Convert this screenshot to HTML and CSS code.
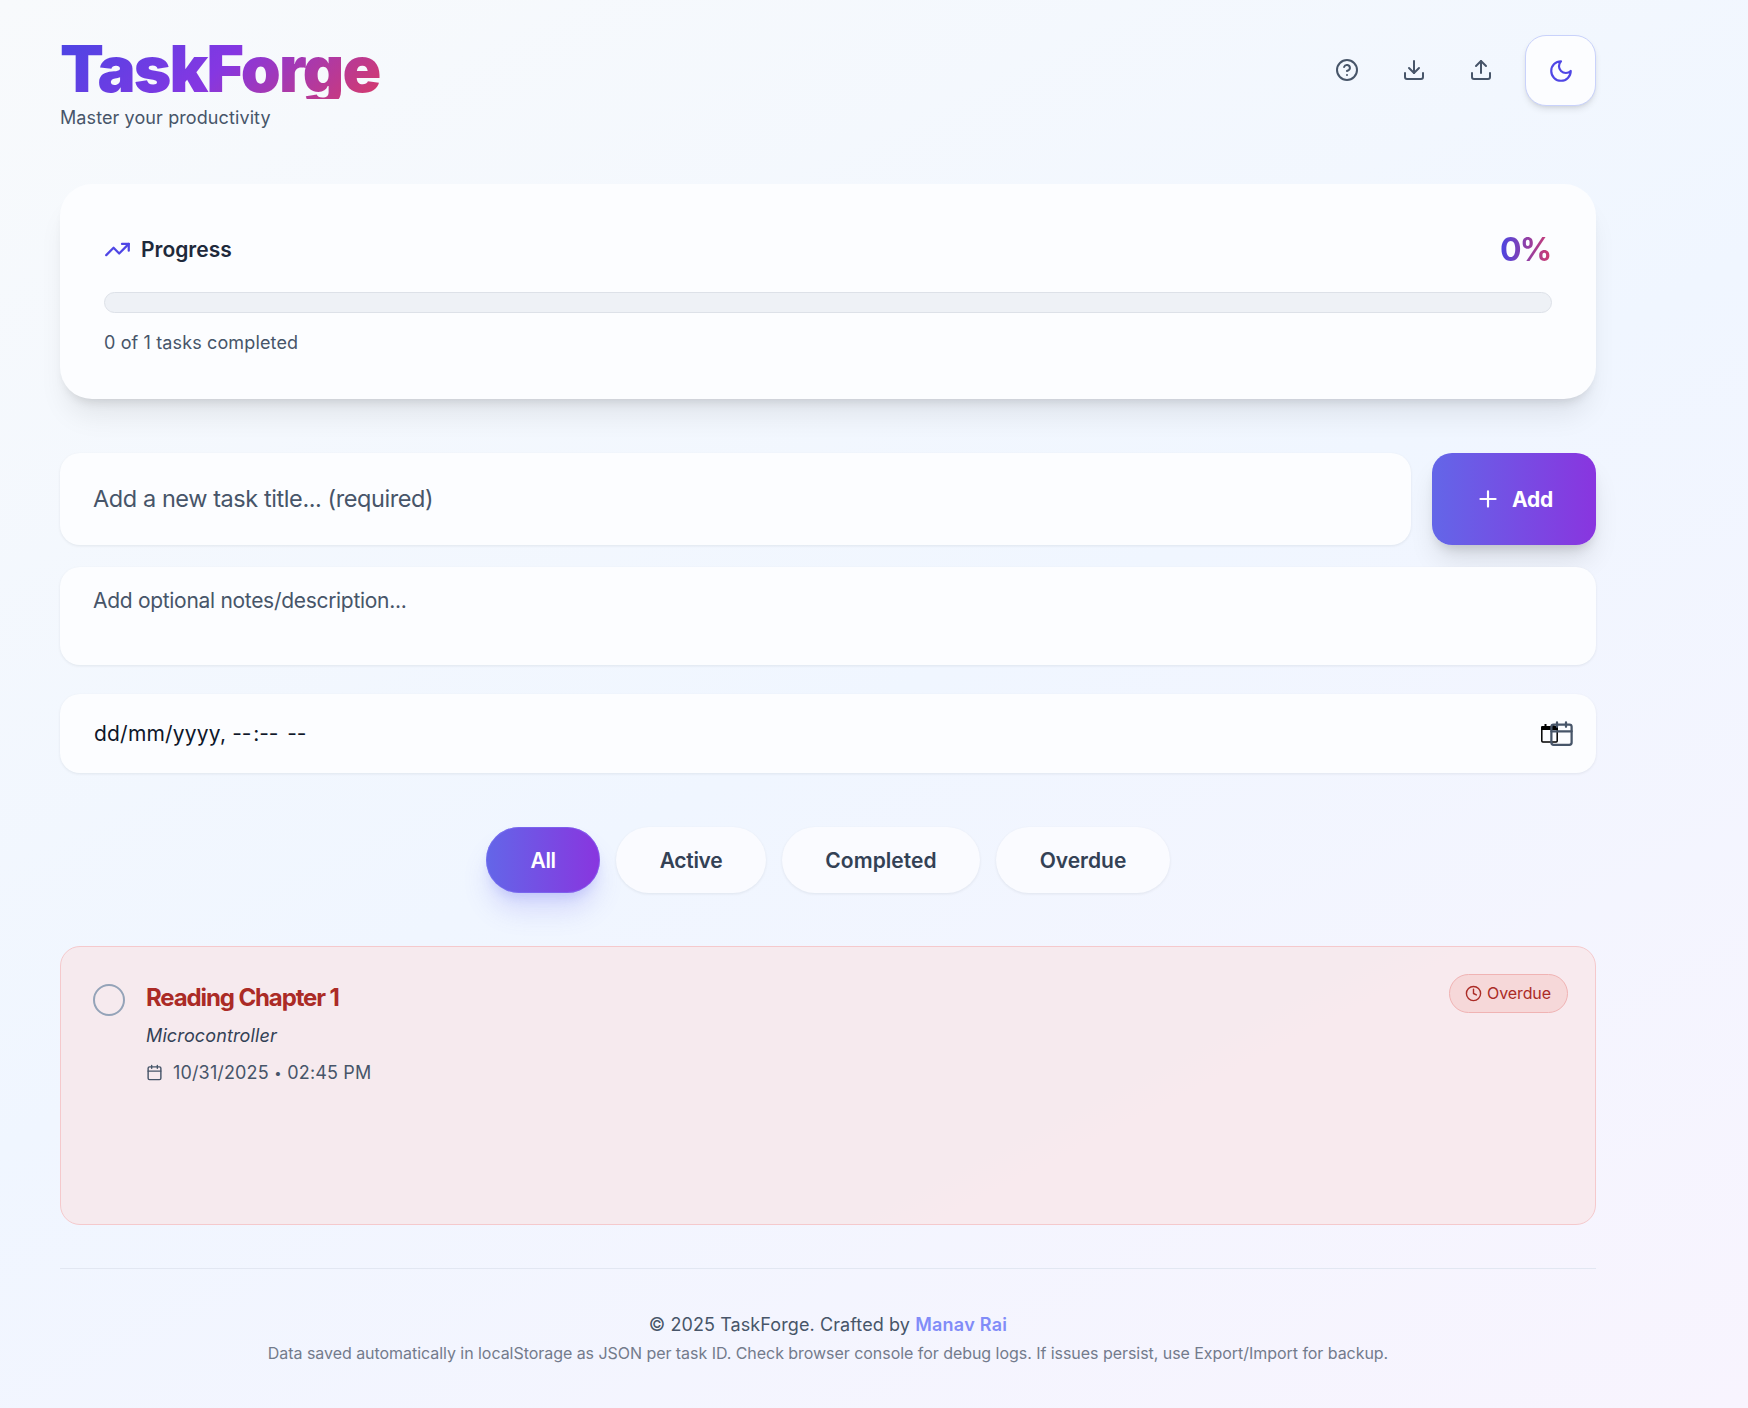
FILE: index.html
```html
<!DOCTYPE html>
<html lang="en">
<head>
<meta charset="utf-8">
<title>TaskForge</title>
<link rel="stylesheet" href="styles.css">
</head>
<body>
<div class="container">
  <header class="header">
    <div>
      <h1 class="brand">TaskForge</h1>
      <p class="tagline">Master your productivity</p>
    </div>
    <div class="actions">
      <button class="icon-btn" aria-label="Help"><svg class="icon" viewBox="0 0 24 24"><circle cx="12" cy="12" r="10"/><path d="M9.09 9a3 3 0 0 1 5.83 1c0 2-3 3-3 3"/><path d="M12 17h.01"/></svg></button>
      <button class="icon-btn" aria-label="Export"><svg class="icon" viewBox="0 0 24 24"><path d="M21 15v4a2 2 0 0 1-2 2H5a2 2 0 0 1-2-2v-4"/><path d="m7 10 5 5 5-5"/><path d="M12 15V3"/></svg></button>
      <button class="icon-btn" aria-label="Import"><svg class="icon" viewBox="0 0 24 24"><path d="M21 15v4a2 2 0 0 1-2 2H5a2 2 0 0 1-2-2v-4"/><path d="m17 8-5-5-5 5"/><path d="M12 3v12"/></svg></button>
      <button class="theme-btn" aria-label="Toggle theme"><svg class="icon" viewBox="0 0 24 24"><path d="M12 3a6 6 0 0 0 9 9 9 9 0 1 1-9-9Z"/></svg></button>
    </div>
  </header>

  <section class="progress">
    <div class="progress-head">
      <div class="progress-label">
        <svg class="trend" viewBox="0 0 24 24"><path d="m22 7-8.5 8.5-5-5L2 17"/><path d="M16 7h6v6"/></svg>
        <h2 class="progress-title">Progress</h2>
      </div>
      <span class="percent">0%</span>
    </div>
    <div class="bar"></div>
    <p class="progress-text">0 of 1 tasks completed</p>
  </section>

  <form class="form">
    <div class="title-row">
      <input class="field title-input" type="text" placeholder="Add a new task title... (required)">
      <button class="add-btn" type="button"><svg class="plus" viewBox="0 0 24 24"><path d="M5 12h14M12 5v14"/></svg><span>Add</span></button>
    </div>
    <textarea class="field notes" placeholder="Add optional notes/description..."></textarea>
    <div class="field date-field">
      <span class="date-text"><span class="date-part">dd/mm/yyyy,</span><span class="dash">--</span><span class="colon">:</span><span class="dash">--</span><span class="dash meridiem">--</span></span>
      <span class="date-icons">
        <svg class="picker" viewBox="0 0 17 19"><path class="solid" d="M1.5 2h2V0h2v2h6V0h2v2h2a1.4 1.4 0 0 1 1.4 1.4V6H.1V3.400A1.400 1.400 0 0 1 1.500 2Z"/><rect x=".8" y="2.800" width="15.400" height="15.200" rx="1"/></svg>
        <svg class="calendar" viewBox="0 0 24 24"><path d="M8 2v4M16 2v4"/><rect width="18" height="18" x="3" y="4" rx="2"/><path d="M3 10h18"/></svg>
      </span>
    </div>
  </form>

  <nav class="filters">
    <button class="filter active all">All</button>
    <button class="filter act">Active</button>
    <button class="filter completed">Completed</button>
    <button class="filter overdue">Overdue</button>
  </nav>

  <article class="task">
    <span class="check"></span>
    <div class="task-body">
      <h3 class="task-title">Reading Chapter 1</h3>
      <p class="task-notes">Microcontroller</p>
      <p class="task-date"><svg class="small-cal" viewBox="0 0 24 24"><path d="M8 2v4M16 2v4"/><rect width="18" height="18" x="3" y="4" rx="2"/><path d="M3 10h18"/></svg><span>10/31/2025 <span class="dot">•</span> 02:45 PM</span></p>
    </div>
    <span class="badge"><svg class="clock" viewBox="0 0 24 24"><circle cx="12" cy="12" r="10"/><path d="M12 6v6l4 2"/></svg>Overdue</span>
  </article>

  <footer class="footer">
    <p class="credit">© 2025 TaskForge. Crafted by <a class="author">Manav Rai</a></p>
    <p class="hint">Data saved automatically in localStorage as JSON per task ID. Check browser console for debug logs. If issues persist, use Export/Import for backup.</p>
  </footer>
</div>
</body>
</html>
```
FILE: styles.css
```css
* { box-sizing: border-box; margin: 0; padding: 0; }

body {
  min-height: 1408px;
  font-family: Inter, "Liberation Sans", sans-serif;
  font-size: 18px;
  line-height: 27px;
  color: #1e293b;
  background: linear-gradient(153deg, #f8fafc 0%, #f0f6ff 50%, #f8f4fe 100%);
}

button, input, textarea { font-family: inherit; border: 0; outline: 0; }

svg {
  fill: none;
  stroke: currentColor;
  stroke-width: 2;
  stroke-linecap: round;
  stroke-linejoin: round;
  flex: none;
}

.container { width: 1536px; margin-left: 60px; padding-top: 35px; }

/* Header */
.header { display: flex; justify-content: space-between; align-items: flex-start; height: 149px; }

.brand {
  width: 321px;
  height: 64px;
  margin-left: -1px;
  padding-left: 1px;
  font-size: 64px;
  line-height: 67px;
  font-weight: 900;
  letter-spacing: -1.850px;
  color: transparent;
  background: linear-gradient(135deg, #4a45e4 0%, #8537e2 50%, #d63a6a 100%);
  -webkit-background-clip: text;
  background-clip: text;
}

.tagline { margin-top: 5px; color: #475569; letter-spacing: .1px; }

.actions { display: flex; align-items: center; gap: 20px; }

.icon-btn {
  display: grid;
  place-items: center;
  width: 47px;
  height: 47px;
  padding: 0 2px 2px 0;
  background: transparent;
  color: #475569;
}

.icon { width: 24px; height: 24px; }

.theme-btn {
  display: grid;
  place-items: center;
  width: 71px;
  height: 71px;
  border: 1px solid #c9d2fb;
  border-radius: 21px;
  background: #fcfdff;
  color: #4f46e5;
  box-shadow: 0 4px 7px -1px rgba(0, 0, 0, .1), 0 2px 4px -2px rgba(0, 0, 0, .1);
}

.theme-btn .icon { width: 26px; height: 26px; }

/* Progress card */
.progress {
  height: 215px;
  padding: 44px;
  border-radius: 32px;
  background: #fcfdff;
  box-shadow: 0 22px 28px -6px rgba(0, 0, 0, .08), 0 8px 11px -6px rgba(0, 0, 0, .13);
}

.progress-head { display: flex; justify-content: space-between; align-items: center; height: 42px; }
.progress-label { display: flex; align-items: center; gap: 10px; }
.trend { width: 27px; height: 27px; color: #4f46e5; }
.progress-title { font-size: 21px; font-weight: 600; }

.percent {
  padding-top: 2px;
  font-size: 32px;
  line-height: 42px;
  font-weight: 700;
  letter-spacing: -1.800px;
  padding-right: 1.500px;
  color: transparent;
  background: linear-gradient(90deg, #4a45e4, #d23a6c);
  -webkit-background-clip: text;
  background-clip: text;
}

.bar { height: 21px; margin-top: 22px; border: 1px solid #dde1e8; border-radius: 11px; background: #eef1f6; }
.progress-text { margin-top: 16px; color: #475569; letter-spacing: .13px; }

/* Task form */
.form { margin-top: 54px; }
.title-row { display: flex; gap: 21px; }

.field {
  display: block;
  width: 100%;
  border-radius: 20px;
  background: #fcfdff;
  box-shadow: 0 1px 3px rgba(15, 23, 42, .08);
}

.field::placeholder { color: #475569; opacity: 1; }
.title-input { flex: 1; height: 92px; padding: 0 33px 2px; font-size: 23.500px; letter-spacing: -.42px; }

.add-btn {
  display: flex;
  justify-content: center;
  align-items: center;
  gap: 11px;
  width: 164px;
  height: 92px;
  border-radius: 20px;
  font-size: 21px;
  font-weight: 700;
  letter-spacing: -.2px;
  color: #fff;
  background: linear-gradient(90deg, #6366e8, #8935df);
  box-shadow: 0 18px 28px -4px rgba(0, 0, 0, .11), 0 8px 12px -5px rgba(0, 0, 0, .15);
}

.plus { width: 26px; height: 26px; }

.notes {
  position: relative;
  height: 98px;
  margin-top: 22px;
  padding: 18px 33px;
  font-size: 21px;
  line-height: 32px;
  letter-spacing: -.3px;
  resize: none;
}

.date-field {
  display: flex;
  justify-content: space-between;
  align-items: center;
  height: 79px;
  margin-top: 29px;
  padding: 0 21px 0 34px;
  font-size: 21px;
  color: #0f172a;
}

.date-text { display: flex; }
.date-part { letter-spacing: .2px; margin-right: 6px; }
.dash { width: 21px; letter-spacing: -.2px; }
.colon { width: 6px; }
.meridiem { margin-left: 7px; }
.date-icons { display: flex; align-items: center; }
.picker { width: 17px; height: 19px; margin-right: -10px; color: #000; stroke-width: 1.500; }
.picker .solid { fill: #000; stroke: none; }
.calendar { width: 27px; height: 27px; color: #475569; }

/* Filters */
.filters { display: flex; justify-content: center; gap: 16px; margin-top: 54px; }

.filter {
  height: 66px;
  border-radius: 33px;
  font-size: 21px;
  font-weight: 600;
  color: #334155;
  background: #fafbff;
  box-shadow: 0 1px 3px rgba(15, 23, 42, .08);
}

.all { width: 114px; letter-spacing: -.5px; }
.act { width: 150px; letter-spacing: -.3px; }
.completed { width: 198px; letter-spacing: .05px; }
.overdue { width: 174px; letter-spacing: 0; }

.active {
  color: #fff;
  background: linear-gradient(90deg, #6366e8, #8935df);
  box-shadow: inset 0 0 0 1px rgba(129, 120, 248, .5), 0 20px 26px -2px rgba(99, 102, 241, .18), 0 8px 12px -4px rgba(99, 102, 241, .2);
}

/* Task card */
.task {
  display: flex;
  align-items: flex-start;
  height: 279px;
  margin-top: 53px;
  padding: 27px 27px 0 32px;
  border: 1px solid #f5c9cc;
  border-radius: 20px;
  background: linear-gradient(153deg, #f6eaee 64%, #f8eaee 68%);
}

.check { width: 32px; height: 32px; margin-top: 10px; border: 2px solid #94a3b8; border-radius: 50%; }
.task-body { flex: 1; margin: 9px 0 0 21px; }
.task-title { font-size: 24px; line-height: 30px; font-weight: 700; letter-spacing: -1.120px; color: #ab2b26; }
.task-notes { margin-top: 9px; font-style: italic; letter-spacing: .12px; color: #334155; }
.task-date { display: flex; align-items: center; gap: 10px; margin-top: 10px; color: #475569; letter-spacing: .15px; }
.dot { display: inline-block; width: 8px; font-size: 13px; line-height: 18px; text-align: center; vertical-align: 1px; }
.small-cal { width: 17px; height: 17px; }

.badge {
  display: flex;
  justify-content: center;
  align-items: center;
  gap: 5px;
  width: 119px;
  height: 39px;
  border: 1px solid #f0b3b3;
  border-radius: 20px;
  padding-right: 1px;
  font-size: 16px;
  letter-spacing: -.1px;
  color: #ab2b26;
  background: #f6d8d9;
}

.clock { width: 17px; height: 17px; }

/* Footer */
.footer { margin-top: 43px; padding-top: 42px; border-top: 1px solid #e2e7f2; text-align: center; color: #475569; }
.credit { letter-spacing: .09px; }
.author { font-weight: 600; letter-spacing: .26px; color: #818cf8; }
.hint { margin-top: 3px; font-size: 16px; line-height: 24px; letter-spacing: -.046px; color: #737b8c; }
```
